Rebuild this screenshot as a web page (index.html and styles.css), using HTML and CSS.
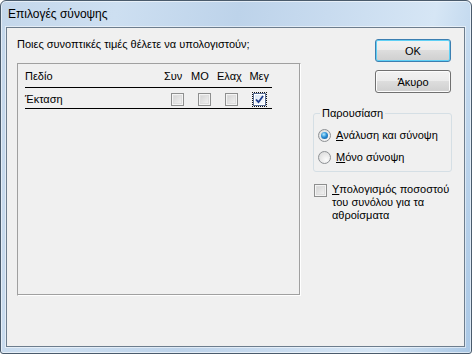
FILE: index.html
```html
<!DOCTYPE html>
<html>
<head>
  <title>Επιλογές σύνοψης</title>
  <link rel="stylesheet" href="styles.css">
</head>
<body>
  <div class="window">
    <div class="titlebar">Επιλογές σύνοψης</div>

    <div class="client">
      <div class="main">
        <p class="prompt">Ποιες συνοπτικές τιμές θέλετε να υπολογιστούν;</p>

        <div class="panel">
          <div class="grid head">
            <span>Πεδίο</span>
            <span>Συν</span>
            <span>ΜΟ</span>
            <span>Ελαχ</span>
            <span>Μεγ</span>
          </div>
          <div class="grid row">
            <span>Έκταση</span>
            <span class="check"></span>
            <span class="check"></span>
            <span class="check"></span>
            <span class="check checked">
              <svg width="9" height="9" viewBox="0 0 9 9">
                <path d="M1 4.5 L3.5 7.2 L8 1" fill="none" stroke="#1b3a8c" stroke-width="1.8"/>
              </svg>
            </span>
          </div>
        </div>
      </div>

      <div class="side">
        <button class="btn default">OK</button>
        <button class="btn">Άκυρο</button>

        <fieldset class="group">
          <legend>Παρουσίαση</legend>
          <label class="option"><span class="radio on"></span><span><u>Α</u>νάλυση και σύνοψη</span></label>
          <label class="option"><span class="radio"></span><span><u>Μ</u>όνο σύνοψη</span></label>
        </fieldset>

        <label class="percent">
          <span class="check"></span>
          <span class="percent-text"><u>Υ</u>πολογισμός ποσοστού του συνόλου για τα αθροίσματα</span>
        </label>
      </div>
    </div>
  </div>
</body>
</html>
```

FILE: styles.css
```css
body {
  margin: 0;
  font-family: "Liberation Sans", Arial, sans-serif;
  font-size: 11px;
  color: #000;
}

.window {
  box-sizing: border-box;
  width: 472px;
  height: 354px;
  display: flex;
  flex-direction: column;
  padding: 0 6px 6px 5px;
  border: 1px solid #4a5b6c;
  border-radius: 6px 6px 3px 3px;
  background: linear-gradient(100deg, #c4d7eb 0%, #cddff1 22%, #bdd3ea 45%, #c8dbef 62%, #d6e6f5 82%, #a9c7e5 100%);
  box-shadow: inset 0 0 0 1px rgba(255, 255, 255, 0.55);
}

.titlebar {
  height: 26px;
  line-height: 26px;
  padding-left: 2px;
  font-size: 12px;
}

.client {
  flex: 1;
  display: flex;
  padding-left: 10px;
  background: #f0f0f0;
  border: 1px solid #6d7d8d;
  box-shadow: 0 0 0 1px rgba(255, 255, 255, 0.5);
}

.main {
  width: 284px;
  padding-top: 10px;
}

.prompt {
  margin: 0 0 12px;
  line-height: 13px;
}

.panel {
  box-sizing: border-box;
  height: 233px;
  padding-left: 7px;
  border: 1px solid;
  border-color: #a0a0a0 #fff #fff #a0a0a0;
  box-shadow: inset -1px -1px 0 #a0a0a0;
}

.grid {
  display: grid;
  width: 247px;
  grid-template-columns: 139px 27px 26px 29px 26px;
  align-items: center;
  line-height: 13px;
  border-bottom: 1px solid #000;
}

.head {
  padding: 6px 0 4px;
}

.head span {
  text-align: right;
}

.head span:nth-child(1) { text-align: left; }
.head span:nth-child(2) { padding-right: 14px; }
.head span:nth-child(3) { padding-right: 11px; }
.head span:nth-child(4) { padding-right: 7px; }
.head span:nth-child(5) { padding-right: 3px; }

.row {
  padding: 5px 0 2px;
}

.row .check {
  justify-self: center;
}

.check {
  box-sizing: border-box;
  display: inline-flex;
  align-items: center;
  justify-content: center;
  width: 13px;
  height: 13px;
  border: 1px solid #8e8f8f;
  background: linear-gradient(135deg, #cfcfcf, #f7f7f7);
  box-shadow: inset 0 0 0 1px #f4f4f4, inset 0 0 0 2px #dedede;
}

.check.checked {
  border-color: #5a6f96;
  background: linear-gradient(135deg, #d8e4f2, #fbfdff);
  box-shadow: inset 0 0 0 1px #fff;
  outline: 1px dotted #111;
}

.side {
  width: 139px;
  margin-left: 12px;
  padding-top: 11px;
  display: flex;
  flex-direction: column;
  align-items: flex-start;
}

.btn {
  width: 76px;
  height: 23px;
  margin: 0 0 8px 62px;
  padding: 0;
  font: inherit;
  color: #000;
  border: 1px solid #707070;
  border-radius: 3px;
  background: linear-gradient(#f2f2f2 0%, #ebebeb 50%, #dddddd 50%, #cfcfcf 100%);
  box-shadow: inset 0 0 0 1px #fcfcfc;
}

.btn.default {
  border-color: #3c7fb1;
  box-shadow: inset 0 0 0 1px #5fd0f5;
}

.btn:last-of-type {
  margin-bottom: 0;
}

.group {
  box-sizing: border-box;
  width: 139px;
  margin: 14px 0 0;
  padding: 4px 4px 3px;
  border: 1px solid #d5dfe5;
  border-radius: 3px;
}

.group legend {
  margin-left: 2px;
  padding: 0 2px;
  line-height: 13px;
}

.option {
  display: flex;
  align-items: center;
  height: 22px;
}

.radio {
  box-sizing: border-box;
  width: 13px;
  height: 13px;
  margin-right: 5px;
  border: 1px solid #8d9094;
  border-radius: 50%;
  background: radial-gradient(circle at 65% 70%, #fbfbfb, #d7d7d7);
  display: flex;
  align-items: center;
  justify-content: center;
}

.radio.on::after {
  content: "";
  width: 7px;
  height: 7px;
  border-radius: 50%;
  background: radial-gradient(circle at 40% 35%, #b6ecff 0%, #2b8fd6 45%, #0f4f8f 100%);
}

.percent {
  display: flex;
  align-items: flex-start;
  margin-top: 11px;
  padding-left: 1px;
  line-height: 13px;
}

.percent .check {
  flex: none;
  margin: 1px 5px 0 0;
}

.percent-text {
  width: 120px;
}
```
